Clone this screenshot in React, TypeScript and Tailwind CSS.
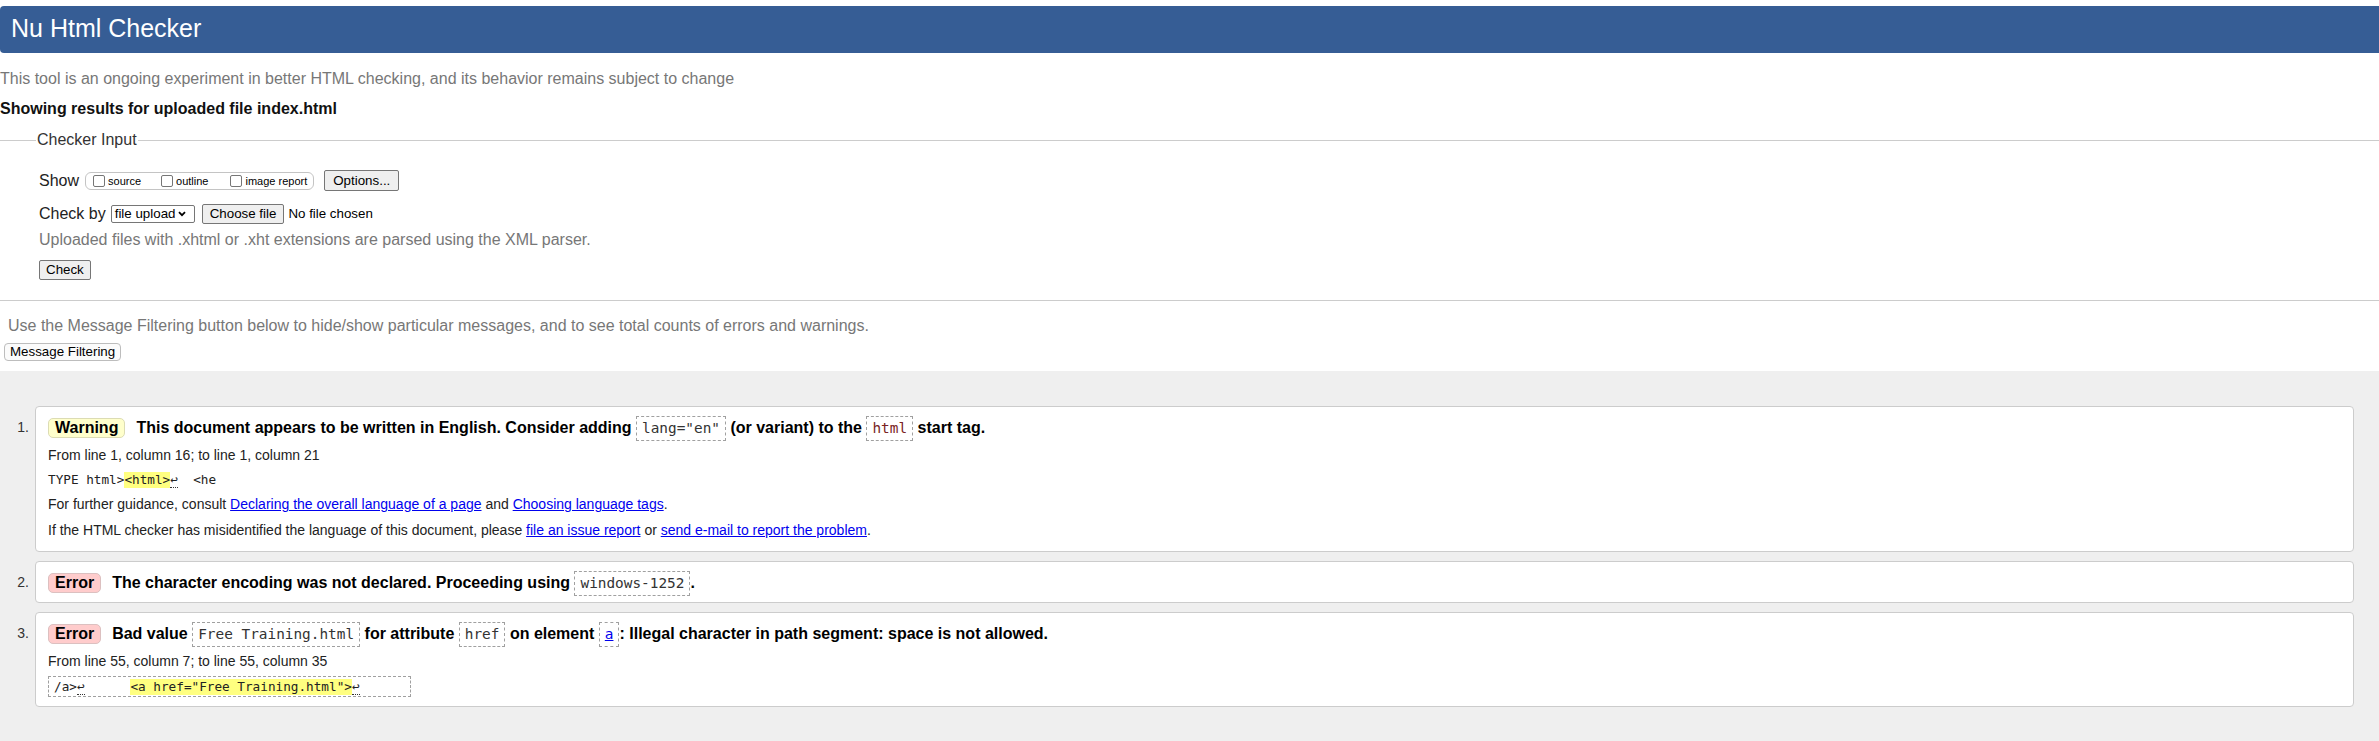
import type { ReactNode } from "react";

// Nu Html Checker — results page for an uploaded file

const MONO = "font-['DejaVu_Sans_Mono','Liberation_Mono',monospace]";

function Btn({ children, className = "" }: { children: ReactNode; className?: string }) {
  return (
    <button
      type="button"
      className={`rounded-[2px] border border-[#767676] bg-[#efefef] text-[13.33px] leading-[16px] text-black ${className}`}
    >
      {children}
    </button>
  );
}

function Check({ label, className = "" }: { label: string; className?: string }) {
  return (
    <label className={`flex items-center ${className}`}>
      <input
        type="checkbox"
        className="h-[12px] w-[12px] appearance-none rounded-[2px] border border-[#767676] bg-white"
      />
      <span className="ml-[3px] leading-[14px]">{label}</span>
    </label>
  );
}

function Chip({ children, tone = "text-[#333]" }: { children: ReactNode; tone?: string }) {
  return (
    <span
      className={`inline-block border border-dashed border-[#a0a0a0] px-[5px] align-baseline text-[14.4px] font-normal leading-[23px] ${MONO} ${tone}`}
    >
      {children}
    </span>
  );
}

function Badge({ kind }: { kind: "Warning" | "Error" }) {
  const look =
    kind === "Warning"
      ? "bg-[#ffffcc] border-[#dcdcb4]"
      : "bg-[#ffcccc] border-[#dcc0c0]";
  return (
    <span className={`mr-[11px] inline-block rounded-[5px] border px-[6px] leading-[18px] ${look}`}>
      {kind}
    </span>
  );
}

function Lnk({ children }: { children: ReactNode }) {
  return <a className="text-[#0000ee] underline">{children}</a>;
}

function Ret() {
  return <span className="border-b border-dotted border-[#333]">↩</span>;
}

function Hi({ children }: { children: ReactNode }) {
  return <span className="inline-block bg-[#ffff80] leading-[16px]">{children}</span>;
}

function Item({ n, children, pad = "pb-[8px]" }: { n: number; children: ReactNode; pad?: string }) {
  return (
    <li className="flex">
      <span className="w-[35px] flex-none pr-[6px] pt-[9px] text-right text-[14px] leading-[25px] text-[#333]">
        {n}.
      </span>
      <div className={`flex-1 rounded-[4px] border border-[#cccccc] bg-white pl-[12px] pt-[8px] ${pad}`}>
        {children}
      </div>
    </li>
  );
}

export default function App() {
  return (
    <div className="flex min-h-[741px] flex-col bg-white font-['Liberation_Sans',Arial,sans-serif] text-[16px] text-[#222]">
      <div className="pt-[6px]">
        <h1 className="h-[47px] rounded-l-[4px] bg-[#365d95] pl-[11px] text-[25px] leading-[45px] text-white">
          Nu Html Checker
        </h1>
      </div>

      <p className="mt-[16px] leading-[20px] text-[#777]">
        This tool is an ongoing experiment in better HTML checking, and its behavior remains subject to change
      </p>
      <p className="mt-[10px] font-bold leading-[20px] text-[#111]">
        Showing results for uploaded file index.html
      </p>

      {/* Checker input */}
      <fieldset className="mt-[12px] border-y border-[#cccccc] pb-[20px] pl-[36px]">
        <legend className="px-[1px] leading-[18px] text-[#333]">Checker Input</legend>
        <div className="pl-[3px]">
          <div className="mt-[21px] flex h-[21px] items-center">
            <span className="leading-[20px]">Show</span>
            <span className="ml-[6px] flex h-[18px] items-center rounded-[6px] border border-[#c4c4c4] pl-[7px] pr-[6px] text-[11px] text-black">
              <Check label="source" />
              <Check label="outline" className="ml-[20px]" />
              <Check label="image report" className="ml-[22px]" />
            </span>
            <Btn className="ml-[10px] h-[21px] px-[8px]">Options...</Btn>
          </div>

          <div className="mt-[13px] flex h-[20px] items-center">
            <span className="leading-[20px]">Check by</span>
            <span className="ml-[5px] flex h-[18px] w-[84px] items-center justify-between rounded-[2px] border border-[#767676] bg-white pl-[3px] pr-[8px] text-[13.33px] text-black">
              file upload
              <svg width="8" height="6" viewBox="0 0 8 6" aria-hidden>
                <polyline points="1,1.2 4,4.2 7,1.2" fill="none" stroke="#000" strokeWidth="1.8" />
              </svg>
            </span>
            <Btn className="ml-[7px] h-[20px] px-[7px]">Choose file</Btn>
            <span className="ml-[4px] text-[13.33px] text-black">No file chosen</span>
          </div>

          <p className="mt-[6px] leading-[20px] text-[#777]">
            Uploaded files with .xhtml or .xht extensions are parsed using the XML parser.
          </p>

          <div className="mt-[10px] flex">
            <Btn className="h-[20px] px-[6px]">Check</Btn>
          </div>
        </div>
      </fieldset>

      <p className="mt-[15px] pl-[8px] leading-[20px] text-[#777]">
        Use the Message Filtering button below to hide/show particular messages, and to see total counts of errors and warnings.
      </p>
      <div className="mt-[7px] flex pl-[4px]">
        <button
          type="button"
          className="h-[18px] rounded-[4px] border border-[#bdbdbd] bg-[#fbfbfb] px-[5px] text-[13.33px] leading-[16px] text-black"
        >
          Message Filtering
        </button>
      </div>

      {/* Messages */}
      <div className="mt-[10px] flex-1 bg-[#efefef] pb-[30px] pr-[25px] pt-[35px]">
        <ol className="flex flex-col gap-[9px]">
          <Item n={1} pad="pb-[11px]">
            <div className="h-[25px] whitespace-nowrap font-bold leading-[25px] text-black">
              <Badge kind="Warning" />
              This document appears to be written in English. Consider adding <Chip>lang="en"</Chip> (or
              variant) to the <Chip tone="text-[#7a2323]">html</Chip> start tag.
            </div>
            <p className="mt-[5px] text-[14px] leading-[20px]">From line 1, column 16; to line 1, column 21</p>
            <p className={`mt-[7px] whitespace-pre text-[12.7px] leading-[16px] ${MONO}`}>
              TYPE html&gt;<Hi>&lt;html&gt;</Hi>
              <Ret />
              {"  <he"}
            </p>
            <p className="mt-[6px] text-[14px] leading-[20px]">
              For further guidance, consult <Lnk>Declaring the overall language of a page</Lnk> and{" "}
              <Lnk>Choosing language tags</Lnk>.
            </p>
            <p className="mt-[6px] text-[14px] leading-[20px]">
              If the HTML checker has misidentified the language of this document, please{" "}
              <Lnk>file an issue report</Lnk> or <Lnk>send e-mail to report the problem</Lnk>.
            </p>
          </Item>

          <Item n={2} pad="pb-[7px]">
            <div className="h-[25px] whitespace-nowrap font-bold leading-[25px] text-black">
              <Badge kind="Error" />
              The character encoding was not declared. Proceeding using <Chip>windows-1252</Chip>.
            </div>
          </Item>

          <Item n={3} pad="pb-[9px]">
            <div className="h-[25px] whitespace-nowrap font-bold leading-[25px] text-black">
              <Badge kind="Error" />
              Bad value <Chip>Free Training.html</Chip> for attribute <Chip>href</Chip> on element{" "}
              <Chip>
                <Lnk>a</Lnk>
              </Chip>
              : Illegal character in path segment: space is not allowed.
            </div>
            <p className="mt-[5px] text-[14px] leading-[20px]">From line 55, column 7; to line 55, column 35</p>
            <div
              className={`mt-[5px] h-[21px] w-[363px] whitespace-pre border border-dashed border-[#a0a0a0] pl-[5px] text-[12.7px] leading-[19px] ${MONO}`}
            >
              /a&gt;
              <Ret />
              {"      "}
              <Hi>&lt;a href="Free Training.html"&gt;</Hi>
              <Ret />
            </div>
          </Item>
        </ol>
      </div>
    </div>
  );
}
